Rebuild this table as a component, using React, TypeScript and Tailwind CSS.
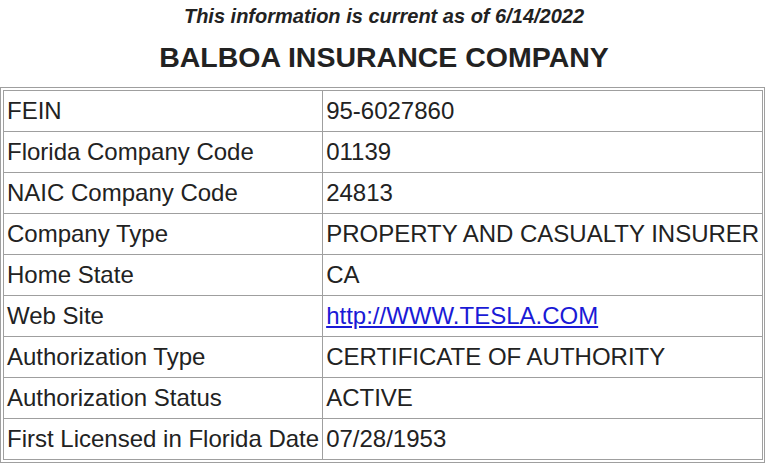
import React from 'react';

const rows: { label: string; value: string; link?: boolean }[] = [
  { label: 'FEIN', value: '95-6027860' },
  { label: 'Florida Company Code', value: '01139' },
  { label: 'NAIC Company Code', value: '24813' },
  { label: 'Company Type', value: 'PROPERTY AND CASUALTY INSURER' },
  { label: 'Home State', value: 'CA' },
  { label: 'Web Site', value: 'http://WWW.TESLA.COM', link: true },
  { label: 'Authorization Type', value: 'CERTIFICATE OF AUTHORITY' },
  { label: 'Authorization Status', value: 'ACTIVE' },
  { label: 'First Licensed in Florida Date', value: '07/28/1953' },
];

const App: React.FC = () => {
  return (
    <div className="w-[768px] h-[465px] overflow-hidden bg-white text-[#222] font-['Liberation_Sans',Arial,sans-serif]">
      <p className="pt-[4px] text-center text-[20px] leading-[24px] font-bold italic">
        This information is current as of 6/14/2022
      </p>
      <h1 className="mt-[13px] text-center text-[28.5px] leading-[32px] font-bold">
        BALBOA INSURANCE COMPANY
      </h1>

      {/* company details table */}
      <div className="mt-[14px] w-[765px] border border-[#9f9f9f] p-[2px]">
        <table className="w-full border-collapse text-[24px] leading-[28px]">
          <tbody>
            {rows.map(row => (
              <tr key={row.label} className="h-[41px]">
                <td className="w-[318px] border border-[#9f9f9f] px-[3px] py-0 whitespace-nowrap">
                  {row.label}
                </td>
                <td className="border border-[#9f9f9f] px-[3px] py-0 whitespace-nowrap">
                  {row.link ? (
                    <a href="#" className="text-[#1a1ad6] underline">{row.value}</a>
                  ) : (
                    row.value
                  )}
                </td>
              </tr>
            ))}
          </tbody>
        </table>
      </div>
    </div>
  );
};

export default App;
